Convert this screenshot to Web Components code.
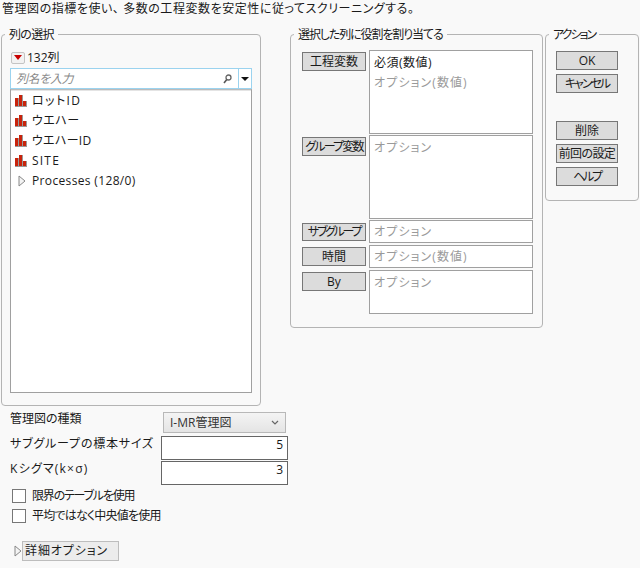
<!DOCTYPE html>
<html lang="ja"><head><meta charset="utf-8">
<style>
html,body{margin:0;padding:0;background:#f9f9f9}
body{width:640px;height:568px;overflow:hidden;font:12px/16px "Open Sans","Noto Sans CJK JP",sans-serif;font-feature-settings:"palt";color:#1a1a1a}
</style></head><body>
<launch-dialog>
  <span slot="title">管理図の指標を使い、 多数の工程変数を安定性に従ってスクリーニングする。</span>
</launch-dialog>
<script>
function def(name,css,html){
  customElements.define(name,class extends HTMLElement{
    constructor(){super();const r=this.attachShadow({mode:'open'});
      r.innerHTML='<style>'+css+'</style>'+html;}
  });
}
def('group-box',`
  :host{display:block;box-sizing:border-box}
  fieldset{margin:0;box-sizing:border-box;height:100%;border:1px solid #b4b4b4;border-radius:4px;padding:0;min-width:0}
  legend{margin-left:3px;padding:0 4px;line-height:18px;height:16px}
  .in{display:flow-root}
`,`<fieldset><legend><slot name="legend"></slot></legend><div class="in"><slot></slot></div></fieldset>`);
def('push-btn',`
  :host{display:block;box-sizing:border-box;height:19px;background:#dcdcdc;border:1px solid #777;text-align:center;line-height:17px;white-space:nowrap;overflow:hidden}
`,'<slot></slot>');
def('drop-box',`
  :host{display:block;box-sizing:border-box;background:#fff;border:1px solid #a0a0a0;padding:2px 4px;color:#9a9a9a;line-height:20px;letter-spacing:1.1px;white-space:nowrap}
  ::slotted(b){font-weight:400;color:#1a1a1a;display:block;letter-spacing:.5px}
`,'<slot></slot>');
def('col-row',`
  :host{display:flex;align-items:center;height:20px;padding-left:3px;white-space:nowrap}
  svg{width:13px;height:13px;margin-right:5px;flex:none}
`,`<svg viewBox="0 0 13 13"><path d="M4 3h1v8H4zM8 0h1v11H8zM12 6h1v5h-1zM1 11h12v1H1z" fill="#9a9a9a"/><path d="M1 3h3v8H1zM5 0h3v11H5zM9 6h3v5H9z" fill="#c8240c"/></svg><slot></slot>`);
def('tree-row',`
  :host{display:flex;align-items:center;height:20px;padding-left:7px;white-space:nowrap;letter-spacing:.35px}
  svg{width:8px;height:12px;margin-right:6px;flex:none}
`,`<svg viewBox="0 0 8 12"><path d="M1 1l6 5-6 5z" fill="#f4f4f4" stroke="#888"/></svg><slot></slot>`);
def('check-row',`
  :host{display:flex;align-items:center;height:20px;margin-left:12px;white-space:nowrap}
  i{display:block;box-sizing:border-box;width:14px;height:14px;background:#fff;border:1px solid #777;margin-right:6px}
`,'<i></i><slot></slot>');
def('num-field',`
  :host{display:block;box-sizing:border-box;width:127px;height:24px;background:#fff;border:1px solid #666;text-align:right;padding:0 4px;line-height:16px}
`,'<slot></slot>');
def('col-picker',`
  :host{display:block;padding:0 8px 0 8px}
  .count{display:flex;align-items:center;height:19px;margin-top:6px;margin-bottom:1px;padding-left:1px}
  .menu{box-sizing:border-box;width:14px;height:12px;border:1px solid #c4c4c4;border-radius:2px;background:#f2f2f2;display:flex;align-items:center;justify-content:center;margin-right:2px}
  .search{box-sizing:border-box;height:21px;border:1px solid #9bd3ef;display:flex;align-items:center;background:#fff}
  .ph{flex:1;padding-left:5px;font-style:italic;color:#8a8a8a;letter-spacing:-.4px}
  .drop{box-sizing:border-box;width:13px;height:19px;border-left:1px solid #9bd3ef;display:flex;align-items:center;justify-content:center}
  .mag{margin-right:6px;display:block}
  .list{box-sizing:border-box;height:304px;border:1px solid #a0a0a0;border-top-color:#bbb;background:#fff;padding-top:1px;box-shadow:inset 0 1px 0 #e4e4e4}
`,`<div class="count"><span class="menu"><svg width="8" height="5" viewBox="0 0 8 5"><path d="M0 0h8L4 5z" fill="#c80000"/></svg></span>132列</div>
<div class="search"><span class="ph">列名を入力</span><svg class="mag" width="9" height="10" viewBox="0 0 9 10"><circle cx="5.5" cy="3.5" r="2.5" fill="none" stroke="#666" stroke-width="1.3"/><path d="M3.8 5.5L1 9" stroke="#555" stroke-width="1.6"/></svg><span class="drop"><svg width="8" height="4" viewBox="0 0 8 4"><path d="M0 0h8L4 4z" fill="#111"/></svg></span></div>
<div class="list"><slot></slot></div>`);
def('launch-dialog',`
  :host{display:block;width:640px;height:568px;position:relative}
  .title{height:18px;padding:1px 0 0 2px;white-space:nowrap;line-height:16px;letter-spacing:.55px}
  .top{display:flex;align-items:flex-start;margin-top:7px;padding-left:1px}
  .left{width:260px;height:380px;flex:none}
  .right{width:253px;height:302px;margin-left:29px;flex:none}
  .act{width:94px;height:175px;margin-left:2px;flex:none}
  .grid{display:grid;grid-template-columns:64px 164px;column-gap:3px;margin:8px 0 0 11px;}
  .b{padding-top:2px}
  .acts{padding:9px 0 0 10px;display:flex;flex-direction:column}
  .acts push-btn{width:62px;margin-bottom:4px}
  .form{display:grid;grid-template-columns:151px 127px;padding-left:10px}
  .lab{white-space:nowrap;line-height:16px}
  .sel{box-sizing:border-box;width:123px;height:21px;margin-left:2px;border:1px solid #b8b8b8;background:linear-gradient(#f4f4f4,#e4e4e4);display:flex;align-items:center;padding:0 6px;justify-content:space-between;color:#333}
  .adv{display:flex;align-items:center;margin:15px 0 0 14px}
  .advb{box-sizing:border-box;width:97px;height:20px;background:#ececec;border:1px solid #bdbdbd;line-height:18px;padding-left:2px;letter-spacing:.9px}
`,`
<div class="title"><slot name="title"></slot></div>
<div class="top">
  <group-box class="left"><span slot="legend" style="letter-spacing:-.7px">列の選択</span>
    <col-picker>
      <col-row style="letter-spacing:1.4px">ロットID</col-row><col-row style="letter-spacing:.5px">ウエハー</col-row><col-row style="letter-spacing:.3px">ウエハーID</col-row><col-row style="letter-spacing:1.2px">SITE</col-row><tree-row>Processes (128/0)</tree-row>
    </col-picker>
  </group-box>
  <group-box class="right"><span slot="legend" style="letter-spacing:-1.1px">選択した列に役割を割り当てる</span>
    <div class="grid">
      <div class="b"><push-btn>工程変数</push-btn></div><drop-box style="height:84px;margin-bottom:1px"><b>必須(数値)</b>オプション(数値)</drop-box>
      <div class="b"><push-btn style="letter-spacing:-1.8px">グループ変数</push-btn></div><drop-box style="height:84px;margin-bottom:1px">オプション</drop-box>
      <div style="padding-top:3px"><push-btn style="letter-spacing:-2.3px;height:18px;line-height:16px">サブグループ</push-btn></div><drop-box style="height:23px;margin-bottom:2px;padding-top:1px">オプション</drop-box>
      <div class="b"><push-btn>時間</push-btn></div><drop-box style="height:23px;margin-bottom:2px;padding-top:1px">オプション(数値)</drop-box>
      <div class="b"><push-btn>By</push-btn></div><drop-box style="height:44px;padding-top:2px">オプション</drop-box>
    </div>
  </group-box>
  <group-box class="act"><span slot="legend" style="letter-spacing:-2px">アクション</span>
    <div class="acts">
      <push-btn>OK</push-btn><push-btn style="letter-spacing:-2px">キャンセル</push-btn>
      <push-btn style="margin-top:24px">削除</push-btn><push-btn style="letter-spacing:-.6px">前回の設定</push-btn><push-btn style="letter-spacing:-2.3px">ヘルプ</push-btn>
    </div>
  </group-box>
</div>
<div class="form">
  <div class="lab" style="height:30px;padding-top:5px;box-sizing:border-box">管理図の種類</div>
  <div style="padding-top:6px"><div class="sel">I-MR管理図<svg width="8" height="5" viewBox="0 0 8 5"><path d="M1 1l3 3 3-3" fill="none" stroke="#666" stroke-width="1.2"/></svg></div></div>
  <div class="lab" style="height:25px;letter-spacing:.8px">サブグループの標本サイズ</div><num-field>5</num-field>
  <div class="lab" style="height:25px;letter-spacing:1.2px">Kシグマ(k×σ)</div><num-field>3</num-field>
</div>
<check-row style="letter-spacing:-1.2px">限界のテーブルを使用</check-row>
<check-row style="letter-spacing:-.8px">平均ではなく中央値を使用</check-row>
<div class="adv"><svg width="8" height="12" viewBox="0 0 8 12"><path d="M1 1l6 5-6 5z" fill="#f4f4f4" stroke="#888"/></svg><div class="advb">詳細オプション</div></div>
`);
</script>
</body></html>
